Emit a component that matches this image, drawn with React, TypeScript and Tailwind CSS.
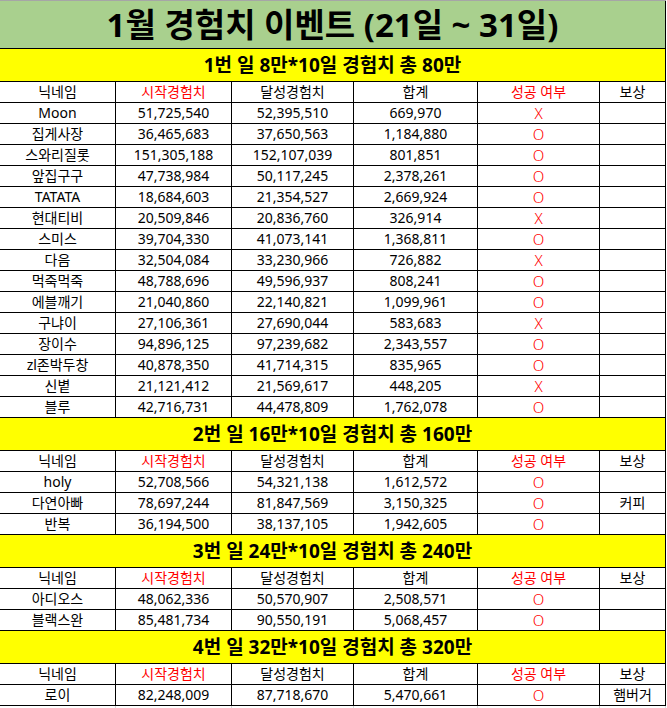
import React from 'react';

type Row = {
  name: string;
  start: string;
  end: string;
  sum: string;
  ok: 'O' | 'X';
  reward?: string;
};

type Section = {
  title: string;
  rows: Row[];
};

const sections: Section[] = [
  {
    title: '1번 일 8만*10일 경험치 총 80만',
    rows: [
      { name: 'Moon', start: '51,725,540', end: '52,395,510', sum: '669,970', ok: 'X' },
      { name: '집게사장', start: '36,465,683', end: '37,650,563', sum: '1,184,880', ok: 'O' },
      { name: '스와리질롯', start: '151,305,188', end: '152,107,039', sum: '801,851', ok: 'O' },
      { name: '앞집구구', start: '47,738,984', end: '50,117,245', sum: '2,378,261', ok: 'O' },
      { name: 'TATATA', start: '18,684,603', end: '21,354,527', sum: '2,669,924', ok: 'O' },
      { name: '현대티비', start: '20,509,846', end: '20,836,760', sum: '326,914', ok: 'X' },
      { name: '스미스', start: '39,704,330', end: '41,073,141', sum: '1,368,811', ok: 'O' },
      { name: '다음', start: '32,504,084', end: '33,230,966', sum: '726,882', ok: 'X' },
      { name: '먹죽먹죽', start: '48,788,696', end: '49,596,937', sum: '808,241', ok: 'O' },
      { name: '에블깨기', start: '21,040,860', end: '22,140,821', sum: '1,099,961', ok: 'O' },
      { name: '구냐이', start: '27,106,361', end: '27,690,044', sum: '583,683', ok: 'X' },
      { name: '장이수', start: '94,896,125', end: '97,239,682', sum: '2,343,557', ok: 'O' },
      { name: 'zl존박두창', start: '40,878,350', end: '41,714,315', sum: '835,965', ok: 'O' },
      { name: '신볕', start: '21,121,412', end: '21,569,617', sum: '448,205', ok: 'X' },
      { name: '블루', start: '42,716,731', end: '44,478,809', sum: '1,762,078', ok: 'O' },
    ],
  },
  {
    title: '2번 일 16만*10일 경험치 총 160만',
    rows: [
      { name: 'holy', start: '52,708,566', end: '54,321,138', sum: '1,612,572', ok: 'O' },
      { name: '다연아빠', start: '78,697,244', end: '81,847,569', sum: '3,150,325', ok: 'O', reward: '커피' },
      { name: '반복', start: '36,194,500', end: '38,137,105', sum: '1,942,605', ok: 'O' },
    ],
  },
  {
    title: '3번 일 24만*10일 경험치 총 240만',
    rows: [
      { name: '아디오스', start: '48,062,336', end: '50,570,907', sum: '2,508,571', ok: 'O' },
      { name: '블랙스완', start: '85,481,734', end: '90,550,191', sum: '5,068,457', ok: 'O' },
    ],
  },
  {
    title: '4번 일 32만*10일 경험치 총 320만',
    rows: [
      { name: '로이', start: '82,248,009', end: '87,718,670', sum: '5,470,661', ok: 'O', reward: '햄버거' },
    ],
  },
];

const cols = 'grid grid-cols-[116px_116px_122px_124px_122px_66px]';
const cell = 'flex items-center justify-center border-r border-black';

function HeaderRow() {
  return (
    <div className={`${cols} h-[21px] border-b border-black text-[14px] leading-none`}>
      <div className={cell}>닉네임</div>
      <div className={`${cell} text-[#ff0000]`}>시작경험치</div>
      <div className={cell}>달성경험치</div>
      <div className={cell}>합계</div>
      <div className={`${cell} text-[#ff0000]`}>성공 여부</div>
      <div className={cell}>보상</div>
    </div>
  );
}

function DataRow({ row }: { row: Row }) {
  return (
    <div className={`${cols} h-[21px] border-b border-black text-[14px] leading-none`}>
      <div className={cell}>{row.name}</div>
      <div className={cell}>{row.start}</div>
      <div className={cell}>{row.end}</div>
      <div className={cell}>{row.sum}</div>
      <div className={`${cell} text-[#ff0000] font-light text-[15px]`}>{row.ok}</div>
      <div className={cell}>{row.reward}</div>
    </div>
  );
}

export default function App() {
  return (
    <div
      className="w-[667px] h-[708px] bg-white text-black overflow-hidden"
      style={{ fontFamily: '"Noto Sans", "Noto Sans CJK KR", sans-serif' }}
    >
      <div className="w-[666px] border-t border-[#a6a6a6]">
        {/* Title */}
        <div className="h-[48px] bg-[#a9d08e] border-b border-r border-black flex items-center justify-center">
          <span className="text-[33px] font-bold leading-none">
            1월 경험치 이벤트 (21일 ~ 31일)
          </span>
        </div>

        {sections.map((s) => (
          <div key={s.title}>
            <div className="h-[33px] bg-[#ffff00] border-b border-r border-black flex items-center justify-center">
              <span className="text-[19px] font-bold leading-none">{s.title}</span>
            </div>
            <HeaderRow />
            {s.rows.map((r) => (
              <DataRow key={r.name} row={r} />
            ))}
          </div>
        ))}

        {/* faint sheet gridlines below */}
        <div className={`${cols} h-[4px]`}>
          <div className="border-r border-[#d9d9d9]" />
          <div className="border-r border-[#d9d9d9]" />
          <div className="border-r border-[#d9d9d9]" />
          <div className="border-r border-[#d9d9d9]" />
          <div className="border-r border-[#d9d9d9]" />
          <div className="border-r border-[#d9d9d9]" />
        </div>
      </div>
    </div>
  );
}
